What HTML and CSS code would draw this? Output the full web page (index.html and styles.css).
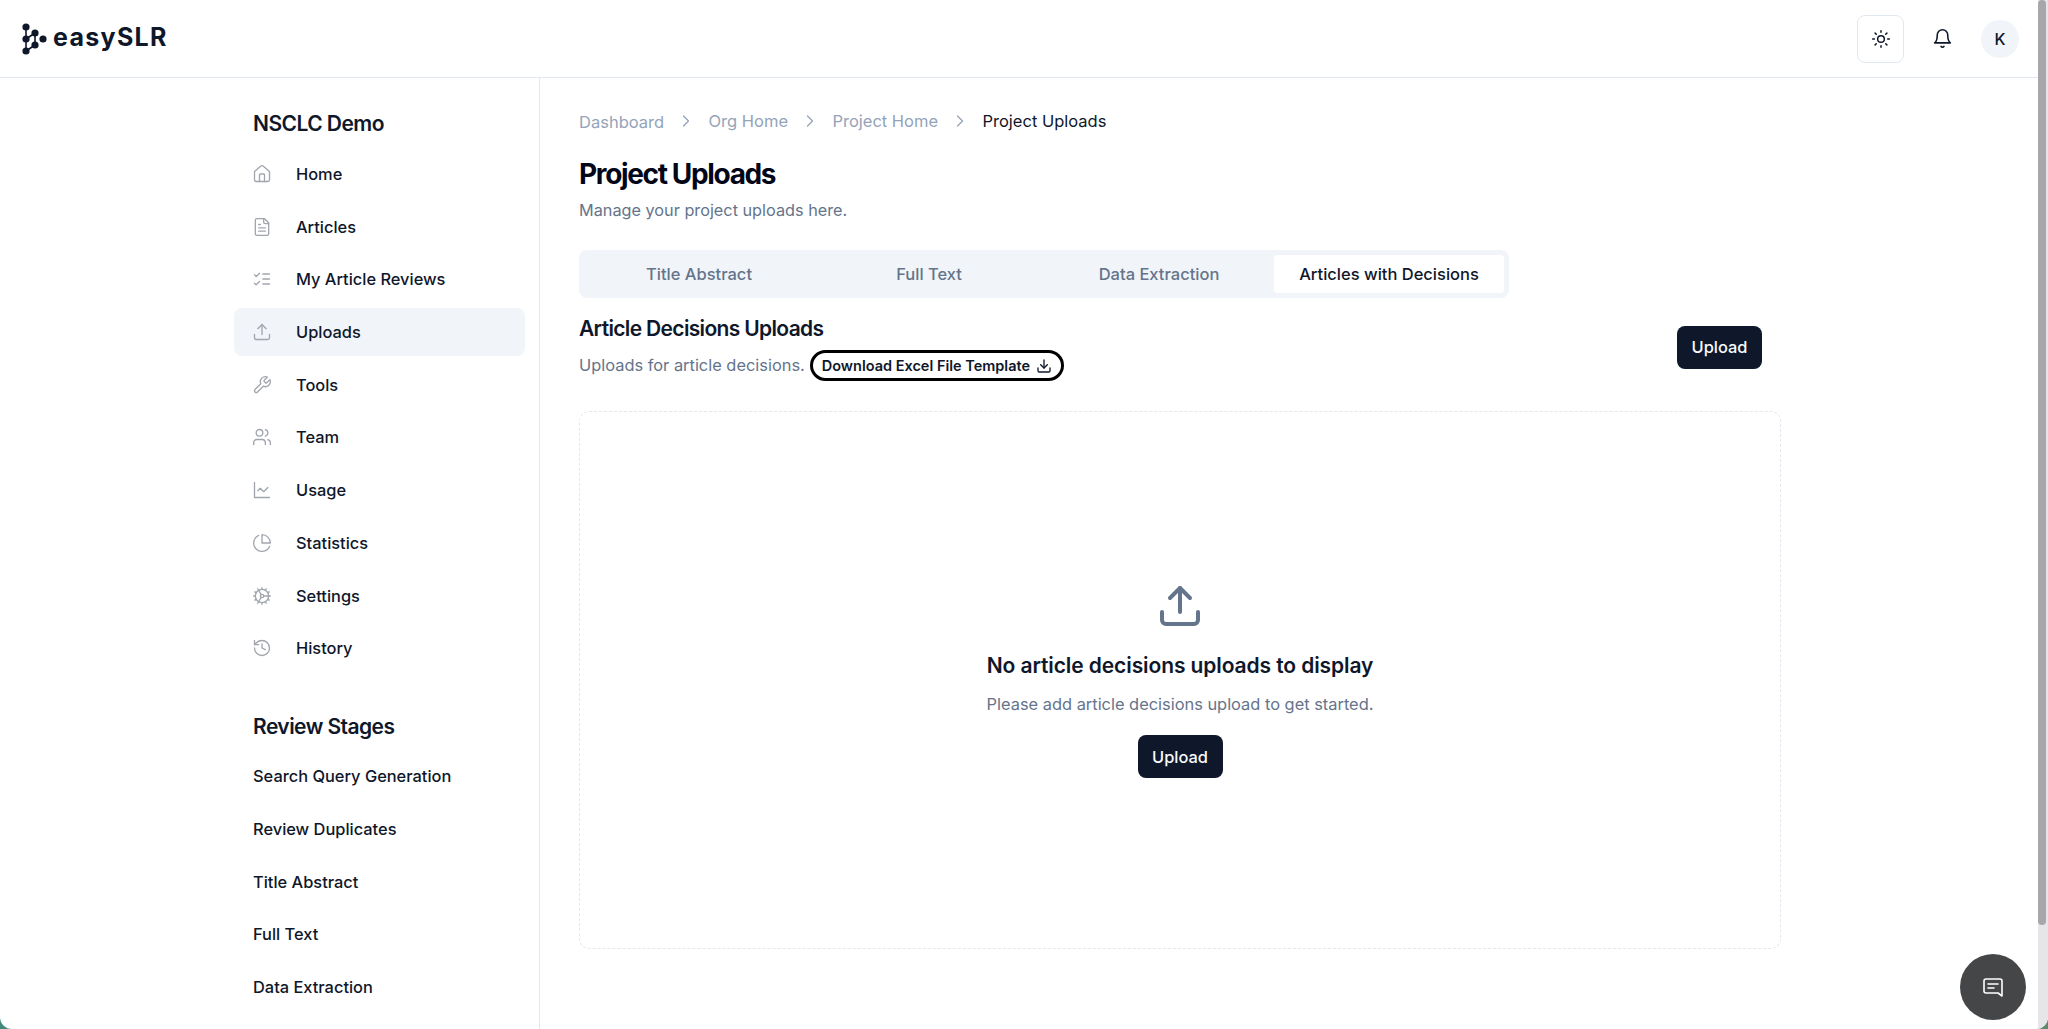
FILE: index.html
```html
<!DOCTYPE html>
<html lang="en">
<head>
    <meta charset="UTF-8">
    <meta name="viewport" content="width=device-width, initial-scale=1.0">
    <title>Project Uploads - easySLR</title>
    <link rel="stylesheet" href="styles.css">
</head>
<body>
    <div class="window">
        <div class="page">
            <header class="topbar">
                <a class="logo" href="#">
                    <svg class="logo-mark" viewBox="0 0 30 36">
                        <path class="logo-lines" d="M6 6v24M15 12v12L6 30M15 12l-9 6"/>
                        <circle cx="6" cy="6" r="3.6"/>
                        <circle cx="6" cy="18" r="3.6"/>
                        <circle cx="6" cy="30" r="3.6"/>
                        <circle cx="15" cy="12" r="3.6"/>
                        <circle cx="15" cy="24" r="3.6"/>
                        <circle cx="23" cy="18" r="3.6"/>
                    </svg>
                    <span class="logo-text">easySLR</span>
                </a>
                <div class="topbar-actions">
                    <button class="theme-btn">
                        <svg class="sun-icon" viewBox="0 0 24 24"><circle cx="12" cy="12" r="4"/><path d="M12 2v2M12 20v2M4.93 4.93l1.41 1.41M17.66 17.66l1.41 1.41M2 12h2M20 12h2M6.34 17.66l-1.41 1.41M19.07 4.93l-1.41 1.41"/></svg>
                    </button>
                    <button class="bell-btn">
                        <svg class="bell-icon" viewBox="0 0 24 24"><path d="M6 8a6 6 0 0 1 12 0c0 7 3 9 3 9H3s3-2 3-9"/><path d="M10.3 21a1.94 1.94 0 0 0 3.4 0"/></svg>
                    </button>
                    <div class="avatar">K</div>
                </div>
            </header>

            <div class="layout">
                <aside class="sidebar">
                    <h2 class="side-title">NSCLC Demo</h2>
                    <nav class="side-nav">
                        <a class="side-link" href="#">
                            <svg class="side-icon" viewBox="0 0 24 24"><path d="M15 21v-8a1 1 0 0 0-1-1h-4a1 1 0 0 0-1 1v8"/><path d="M3 10a2 2 0 0 1 .709-1.528l7-5.999a2 2 0 0 1 2.582 0l7 5.999A2 2 0 0 1 21 10v9a2 2 0 0 1-2 2H5a2 2 0 0 1-2-2z"/></svg>
                            Home
                        </a>
                        <a class="side-link" href="#">
                            <svg class="side-icon" viewBox="0 0 24 24"><path d="M15 2H6a2 2 0 0 0-2 2v16a2 2 0 0 0 2 2h12a2 2 0 0 0 2-2V7Z"/><path d="M14 2v4a2 2 0 0 0 2 2h4"/><path d="M10 9H8"/><path d="M16 13H8"/><path d="M16 17H8"/></svg>
                            Articles
                        </a>
                        <a class="side-link" href="#">
                            <svg class="side-icon" viewBox="0 0 24 24"><path d="m3 17 2 2 4-4"/><path d="m3 7 2 2 4-4"/><path d="M13 6h8"/><path d="M13 12h8"/><path d="M13 18h8"/></svg>
                            My Article Reviews
                        </a>
                        <a class="side-link active" href="#">
                            <svg class="side-icon" viewBox="0 0 24 24"><path d="M21 15v4a2 2 0 0 1-2 2H5a2 2 0 0 1-2-2v-4"/><path d="M17 8l-5-5-5 5"/><path d="M12 3v12"/></svg>
                            Uploads
                        </a>
                        <a class="side-link" href="#">
                            <svg class="side-icon" viewBox="0 0 24 24"><path d="M14.7 6.3a1 1 0 0 0 0 1.4l1.6 1.6a1 1 0 0 0 1.4 0l3.77-3.77a6 6 0 0 1-7.94 7.94l-6.91 6.91a2.12 2.12 0 0 1-3-3l6.91-6.91a6 6 0 0 1 7.94-7.94l-3.76 3.76z"/></svg>
                            Tools
                        </a>
                        <a class="side-link" href="#">
                            <svg class="side-icon" viewBox="0 0 24 24"><path d="M16 21v-2a4 4 0 0 0-4-4H6a4 4 0 0 0-4 4v2"/><circle cx="9" cy="7" r="4"/><path d="M22 21v-2a4 4 0 0 0-3-3.87"/><path d="M16 3.13a4 4 0 0 1 0 7.75"/></svg>
                            Team
                        </a>
                        <a class="side-link" href="#">
                            <svg class="side-icon" viewBox="0 0 24 24"><path d="M3 3v18h18"/><path d="m19 9-5 5-4-4-3 3"/></svg>
                            Usage
                        </a>
                        <a class="side-link" href="#">
                            <svg class="side-icon" viewBox="0 0 24 24"><path d="M21.21 15.89A10 10 0 1 1 8 2.83"/><path d="M22 12A10 10 0 0 0 12 2v10z"/></svg>
                            Statistics
                        </a>
                        <a class="side-link" href="#">
                            <svg class="side-icon" viewBox="0 0 24 24"><path d="M12 20a8 8 0 1 0 0-16 8 8 0 0 0 0 16Z"/><path d="M12 14a2 2 0 1 0 0-4 2 2 0 0 0 0 4Z"/><path d="M12 2v2"/><path d="M12 22v-2"/><path d="m17 20.66-1-1.73"/><path d="M11 10.27 7 3.34"/><path d="m20.66 17-1.73-1"/><path d="m3.34 7 1.73 1"/><path d="M14 12h8"/><path d="M2 12h2"/><path d="m20.66 7-1.73 1"/><path d="m3.34 17 1.73-1"/><path d="m17 3.34-1 1.73"/><path d="m11 13.73-4 6.93"/></svg>
                            Settings
                        </a>
                        <a class="side-link" href="#">
                            <svg class="side-icon" viewBox="0 0 24 24"><path d="M3 12a9 9 0 1 0 9-9 9.75 9.75 0 0 0-6.74 2.74L3 8"/><path d="M3 3v5h5"/><path d="M12 7v5l4 2"/></svg>
                            History
                        </a>
                    </nav>

                    <h2 class="side-title stages-title">Review Stages</h2>
                    <nav class="side-nav">
                        <a class="side-link" href="#">Search Query Generation</a>
                        <a class="side-link" href="#">Review Duplicates</a>
                        <a class="side-link" href="#">Title Abstract</a>
                        <a class="side-link" href="#">Full Text</a>
                        <a class="side-link" href="#">Data Extraction</a>
                    </nav>
                </aside>

                <main class="content">
                    <ol class="breadcrumb">
                        <li class="crumb-first"><a href="#">Dashboard</a></li>
                        <li class="crumb-sep"><svg viewBox="0 0 24 24"><path d="m9 18 6-6-6-6"/></svg></li>
                        <li><a href="#">Org Home</a></li>
                        <li class="crumb-sep"><svg viewBox="0 0 24 24"><path d="m9 18 6-6-6-6"/></svg></li>
                        <li><a href="#">Project Home</a></li>
                        <li class="crumb-sep"><svg viewBox="0 0 24 24"><path d="m9 18 6-6-6-6"/></svg></li>
                        <li class="crumb-current">Project Uploads</li>
                    </ol>

                    <h1 class="page-title">Project Uploads</h1>
                    <p class="page-sub">Manage your project uploads here.</p>

                    <div class="tabs">
                        <button class="tab">Title Abstract</button>
                        <button class="tab">Full Text</button>
                        <button class="tab">Data Extraction</button>
                        <button class="tab active">Articles with Decisions</button>
                    </div>

                    <section class="uploads">
                        <div class="uploads-head">
                            <div>
                                <h3 class="uploads-title">Article Decisions Uploads</h3>
                                <div class="uploads-desc">
                                    <span>Uploads for article decisions.</span>
                                    <button class="template-btn">
                                        Download Excel File Template
                                        <svg viewBox="0 0 24 24"><path d="M21 15v4a2 2 0 0 1-2 2H5a2 2 0 0 1-2-2v-4"/><path d="M7 10l5 5 5-5"/><path d="M12 15V3"/></svg>
                                    </button>
                                </div>
                            </div>
                            <button class="primary-btn">Upload</button>
                        </div>

                        <div class="empty-box">
                            <svg class="empty-icon" viewBox="0 0 24 24"><path d="M21 15v4a2 2 0 0 1-2 2H5a2 2 0 0 1-2-2v-4"/><path d="M17 8l-5-5-5 5"/><path d="M12 3v12"/></svg>
                            <h3 class="empty-title">No article decisions uploads to display</h3>
                            <p class="empty-text">Please add article decisions upload to get started.</p>
                            <button class="primary-btn">Upload</button>
                        </div>
                    </section>
                </main>
            </div>
        </div>

        <div class="scrollbar"><div class="scrollbar-thumb"></div></div>

        <button class="chat-btn">
            <svg viewBox="0 0 24 24"><path d="M5 4h14a2 2 0 0 1 2 2v15l-4-3H5a2 2 0 0 1-2-2V6a2 2 0 0 1 2-2z"/><path d="M7 9h10"/><path d="M7 13h6"/></svg>
        </button>
    </div>
</body>
</html>
```
FILE: styles.css
```css
* {
    margin: 0;
    padding: 0;
    box-sizing: border-box;
}

html, body {
    height: 100%;
    overflow: hidden;
}

body {
    font-family: Inter, "Liberation Sans", sans-serif;
    color: #0f172a;
    background: linear-gradient(90deg, #3f8a7c, #5d8a6c);
}

a {
    color: inherit;
    text-decoration: none;
}

button {
    font-family: inherit;
    border: none;
    background: none;
    cursor: pointer;
}

svg {
    fill: none;
    stroke: currentColor;
    stroke-width: 2;
    stroke-linecap: round;
    stroke-linejoin: round;
    flex-shrink: 0;
}

.window {
    position: relative;
    display: flex;
    height: 1029px;
    background: #fff;
    border-radius: 0 0 12px 12px;
    overflow: hidden;
}

.page {
    flex: 1;
    min-width: 0;
    display: flex;
    flex-direction: column;
}

/* fake window scrollbar */
.scrollbar {
    width: 10px;
    background: #e6e6e9;
    padding-right: 2px;
}

.scrollbar-thumb {
    height: 925px;
    background: #a6a6ab;
    border-radius: 4px;
}

/* top bar */
.topbar {
    height: 78px;
    flex-shrink: 0;
    display: flex;
    align-items: center;
    justify-content: space-between;
    padding: 0 19px 0 20px;
    border-bottom: 1px solid #e2e8f0;
}

.logo {
    display: flex;
    align-items: center;
    gap: 3px;
}

.logo-mark {
    width: 30px;
    height: 36px;
    fill: #0f172a;
    stroke: none;
}

.logo-lines {
    fill: none;
    stroke: #0f172a;
    stroke-width: 1.6;
}

.logo-text {
    padding-bottom: 3px;
    font-size: 25px;
    font-weight: 700;
    letter-spacing: 1.3px;
}

.topbar-actions {
    display: flex;
    align-items: center;
}

.sun-icon {
    width: 20px;
    height: 20px;
    stroke-width: 1.8;
}

.bell-icon {
    width: 21px;
    height: 21px;
    stroke-width: 1.8;
}

.theme-btn {
    width: 47px;
    height: 48px;
    display: flex;
    align-items: center;
    justify-content: center;
    border: 1px solid #e2e8f0;
    border-radius: 8px;
    color: #0f172a;
}

.bell-btn {
    display: flex;
    margin-left: 28px;
    color: #0f172a;
}

.avatar {
    width: 38px;
    height: 38px;
    margin-left: 28px;
    border-radius: 50%;
    background: #f1f5f9;
    display: flex;
    align-items: center;
    justify-content: center;
    font-size: 16px;
    font-weight: 500;
}

/* main layout */
.layout {
    flex: 1;
    min-height: 0;
    display: flex;
}

.sidebar {
    width: 540px;
    flex-shrink: 0;
    padding: 32px 14px 0 234px;
    border-right: 1px solid #e2e8f0;
    overflow: hidden;
}

.side-title {
    font-size: 21px;
    font-weight: 600;
    letter-spacing: -0.55px;
    line-height: 28px;
    padding-left: 19px;
    margin-bottom: 12px;
}

.stages-title {
    margin-top: 41px;
    margin-bottom: 11px;
}

.side-nav {
    display: flex;
    flex-direction: column;
    gap: 4.7px;
}

.side-link {
    height: 48px;
    flex-shrink: 0;
    display: flex;
    align-items: center;
    gap: 25px;
    padding-left: 19px;
    border-radius: 8px;
    font-size: 16.4px;
    font-weight: 500;
}

.side-link.active {
    background: #f1f5f9;
}

.side-icon {
    width: 20px;
    height: 20px;
    margin: 0 -1px;
    color: #a1a5ad;
    stroke-width: 1.6;
}

.content {
    flex: 1;
    min-width: 0;
    padding: 31px 0 0 39px;
}

.breadcrumb {
    list-style: none;
    display: flex;
    align-items: center;
    gap: 12.2px;
    height: 24px;
    font-size: 16.5px;
    color: #94a3b8;
}

.crumb-first {
    padding-top: 1px;
}

.crumb-sep {
    display: flex;
}

.crumb-sep svg {
    width: 20px;
    height: 20px;
    stroke-width: 1.5;
}

.crumb-current {
    color: #0f172a;
}

.page-title {
    margin-top: 23px;
    font-size: 28px;
    font-weight: 700;
    letter-spacing: -1.35px;
    line-height: 36px;
    color: #020617;
}

.page-sub {
    margin-top: 6px;
    font-size: 16.25px;
    line-height: 24px;
    color: #64748b;
}

.tabs {
    display: inline-flex;
    margin-top: 28px;
    height: 48px;
    padding: 5px;
    background: #f1f5f9;
    border-radius: 8px;
}

.tab {
    width: 230px;
    font-size: 16.5px;
    font-weight: 500;
    color: #64748b;
    border-radius: 4px;
}

.tab.active {
    background: #fff;
    color: #0f172a;
}

.uploads {
    width: 1202px;
    margin-top: 16px;
}

.uploads-head {
    display: flex;
    align-items: center;
    justify-content: space-between;
    padding-right: 19px;
}

.uploads-title {
    font-size: 21px;
    font-weight: 600;
    letter-spacing: -0.66px;
    line-height: 30px;
}

.uploads-desc {
    display: flex;
    align-items: center;
    gap: 5px;
    margin-top: 5px;
    font-size: 16.4px;
    color: #64748b;
}

.template-btn {
    display: flex;
    align-items: center;
    gap: 6px;
    height: 31px;
    margin: 1px 0 -1px;
    padding: 0 9px;
    border: 3px solid #000;
    border-radius: 16px;
    font-size: 14.5px;
    font-weight: 600;
    color: #0f172a;
}

.template-btn svg {
    width: 16px;
    height: 16px;
}

.primary-btn {
    width: 85px;
    height: 43px;
    border-radius: 8px;
    background: #0f172a;
    color: #f8fafc;
    font-size: 16.4px;
    font-weight: 500;
}

.empty-box {
    height: 538px;
    margin-top: 31px;
    border: 1px dashed #e2e8f0;
    border-radius: 10px;
    display: flex;
    flex-direction: column;
    align-items: center;
    justify-content: center;
}

.empty-icon {
    width: 48px;
    height: 48px;
    color: #64748b;
}

.empty-title {
    margin-top: 21px;
    font-size: 21px;
    font-weight: 600;
    letter-spacing: -0.1px;
    line-height: 30px;
}

.empty-text {
    margin-top: 11px;
    font-size: 16.4px;
    line-height: 24px;
    color: #64748b;
}

.empty-box .primary-btn {
    margin-top: 19px;
}

.chat-btn {
    position: absolute;
    left: 1960px;
    top: 954px;
    width: 66px;
    height: 66px;
    border-radius: 50%;
    background: #454648;
    color: #fff;
    display: flex;
    align-items: center;
    justify-content: center;
}

.chat-btn svg {
    width: 24px;
    height: 24px;
    stroke-width: 1.6;
}
```
